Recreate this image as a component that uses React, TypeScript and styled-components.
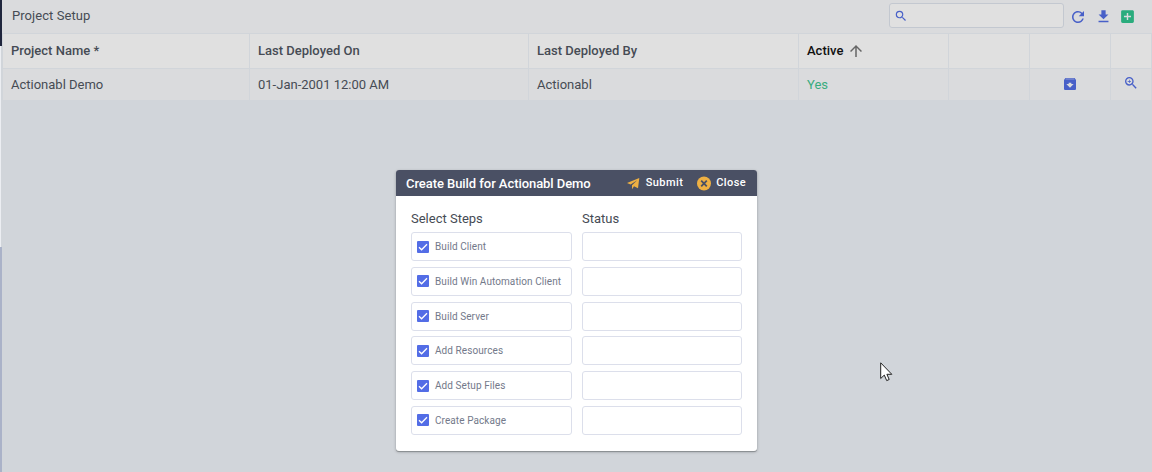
import React from 'react';
import styled, { createGlobalStyle } from 'styled-components';
import { MdSearch, MdRefresh, MdFileDownload, MdAddBox, MdArchive, MdZoomIn, MdArrowUpward } from 'react-icons/md';

const GlobalStyle = createGlobalStyle`
  * { box-sizing: border-box; }
  body { margin: 0; font-family: Roboto, "Liberation Sans", sans-serif; background: #d1d5da; overflow: hidden; }
  svg { display: block; }
`;

const Shell = styled.div`
  display: flex;
  position: relative;
  width: 1152px;
  height: 472px;
  color: #464b54;
`;

const Rail = styled.div`
  display: flex;
  flex-direction: column;
  width: 2px;
`;

const RailPart = styled.div<{ $height?: number; $color: string; $width?: number }>`
  width: ${p => p.$width ?? 2}px;
  background: ${p => p.$color};
  ${p => (p.$height ? `height: ${p.$height}px;` : 'flex: 1;')}
`;

const Page = styled.main`
  flex: 1;
`;

const Toolbar = styled.header`
  display: flex;
  align-items: center;
  height: 33px;
  padding: 0 16px 2px 10px;
  background: #dadbdd;
`;

const Title = styled.h1`
  flex: 1;
  margin: 0;
  font-size: 13px;
  font-weight: 400;
  letter-spacing: 0.06px;
`;

const SearchBox = styled.div`
  display: flex;
  align-items: center;
  width: 175px;
  height: 25px;
  padding-left: 4px;
  margin-right: 5px;
  border: 1px solid #c3c8d0;
  border-radius: 3px;
  background: #e0e0e0;
  color: #4860c8;
`;

const ToolIcon = styled.div<{ $color?: string; $gap?: number }>`
  color: ${p => p.$color ?? '#4860c8'};
  margin: 2px 0 0 ${p => p.$gap ?? 0}px;
`;

const Grid = styled.div`
  border-left: 1px solid #d1d5da;
`;

const GridRow = styled.div<{ $head?: boolean }>`
  display: grid;
  grid-template-columns: 247px 279px 270px 150px 81px 81px 41px;
  height: ${p => (p.$head ? 35 : 32)}px;
  border-top: 1px solid #d1d5da;
  background: ${p => (p.$head ? '#e0e0e0' : '#dadbdd')};
  font-size: 13px;
  font-weight: ${p => (p.$head ? 500 : 400)};
  letter-spacing: 0;
`;

const Cell = styled.div<{ $color?: string; $center?: boolean; $lift?: number }>`
  display: flex;
  align-items: center;
  justify-content: ${p => (p.$center ? 'center' : 'flex-start')};
  gap: 4px;
  padding-left: ${p => (p.$center ? 0 : 8)}px;
  padding-bottom: ${p => p.$lift ?? 0}px;
  border-right: 1px solid #d1d5da;
  color: ${p => p.$color ?? 'inherit'};
`;

const Dialog = styled.section`
  position: absolute;
  left: 396px;
  top: 170px;
  width: 361px;
  height: 281px;
  border-radius: 3px;
  background: #fff;
  box-shadow: 0 1px 0 #8c9194, 0 1px 3px rgba(0, 0, 0, 0.3);
`;

const DialogHeader = styled.div`
  display: flex;
  height: 26px;
  padding: 0 11px 0 10px;
  border-radius: 3px 3px 0 0;
  background: #4a5064;
  color: #fff;
`;

const DialogTitle = styled.h2`
  flex: 1;
  margin: 0;
  font-size: 13px;
  line-height: 27px;
  font-weight: 500;
  letter-spacing: -0.06px;
`;

const Action = styled.button<{ $gap?: number }>`
  display: flex;
  align-items: flex-start;
  gap: 5px;
  margin-left: ${p => p.$gap ?? 0}px;
  padding: 0;
  border: 0;
  background: none;
  color: #fff;
  font: 500 11px/25px Roboto, "Liberation Sans", sans-serif;
  letter-spacing: 0.4px;

  svg { margin-top: 6px; }
`;

const Columns = styled.div`
  display: grid;
  grid-template-columns: 161px 160px;
  column-gap: 10px;
  padding: 14px 15px 0;
`;

const ColumnTitle = styled.div`
  height: 22px;
  font-size: 13px;
  line-height: 18px;
`;

const Field = styled.label`
  display: flex;
  align-items: center;
  height: 29px;
  margin-bottom: 5.75px;
  padding-left: 5px;
  border: 1px solid #dcdfeb;
  border-radius: 3px;
  font-size: 10px;
  letter-spacing: 0.08px;
  color: #73798a;
`;

const Check = styled.span`
  display: flex;
  width: 12px;
  height: 12px;
  margin-right: 6px;
  border-radius: 1px;
  background: #536de6;
`;

const Pointer = styled.svg`
  position: absolute;
  left: 880px;
  top: 362px;
`;

const PlaneIcon = () => (
  <svg width="14" height="15" viewBox="0 0 14 15" fill="#eeb043">
    <path d="M12.3 1.9 0 7 3.6 8.5 10.2 4.2 5 9.2V13.2L7 10.2 11 12.2Z" />
  </svg>
);

const CloseIcon = () => (
  <svg width="14" height="15" viewBox="0 0 14 15">
    <circle cx="7" cy="7.5" r="7" fill="#eeb043" />
    <path d="M4.2 4.7 9.8 10.3M9.8 4.7 4.2 10.3" stroke="#4a5064" strokeWidth="1.8" />
  </svg>
);

const steps = ['Build Client', 'Build Win Automation Client', 'Build Server', 'Add Resources', 'Add Setup Files', 'Create Package'];

export default function App() {
  return (
    <>
      <GlobalStyle />
      <Shell>
        <Rail>
          <RailPart $height={46} $color="#20263d" />
          <RailPart $height={201} $color="#eceef2" $width={1} />
          <RailPart $color="#aab2c8" />
        </Rail>
        <Page>
          <Toolbar>
            <Title>Project Setup</Title>
            <SearchBox><MdSearch size={14} /></SearchBox>
            <ToolIcon><MdRefresh size={18} /></ToolIcon>
            <ToolIcon $gap={8}><MdFileDownload size={17} /></ToolIcon>
            <ToolIcon $gap={7} $color="#2aac7d"><MdAddBox size={17} /></ToolIcon>
          </Toolbar>
          <Grid>
            <GridRow $head>
              <Cell $lift={1}>Project Name *</Cell>
              <Cell $lift={1}>Last Deployed On</Cell>
              <Cell $lift={1}>Last Deployed By</Cell>
              <Cell $lift={1} $color="#111">Active <MdArrowUpward size={18} color="#666" /></Cell>
              <Cell /><Cell /><Cell />
            </GridRow>
            <GridRow>
              <Cell>Actionabl Demo</Cell>
              <Cell>01-Jan-2001 12:00 AM</Cell>
              <Cell>Actionabl</Cell>
              <Cell $color="#39ac7f">Yes</Cell>
              <Cell />
              <Cell $center $lift={1} $color="#4860c8"><MdArchive size={16} /></Cell>
              <Cell $center $lift={3} $color="#4860c8"><MdZoomIn size={16} /></Cell>
            </GridRow>
          </Grid>
        </Page>
        <Dialog>
          <DialogHeader>
            <DialogTitle>Create Build for Actionabl Demo</DialogTitle>
            <Action><PlaneIcon />Submit</Action>
            <Action $gap={14}><CloseIcon />Close</Action>
          </DialogHeader>
          <Columns>
            <div>
              <ColumnTitle>Select Steps</ColumnTitle>
              {steps.map(step => (
                <Field key={step}>
                  <Check>
                    <svg width="12" height="12" viewBox="0 0 12 12" fill="none" stroke="#fff" strokeWidth="1.3">
                      <path d="M2 6.2 4.6 8.8 10 3.2" />
                    </svg>
                  </Check>
                  {step}
                </Field>
              ))}
            </div>
            <div>
              <ColumnTitle>Status</ColumnTitle>
              {steps.map(step => <Field key={step} />)}
            </div>
          </Columns>
        </Dialog>
        <Pointer width="13" height="20" viewBox="0 0 13 20">
          <path d="M.7.8v15.7l3.6-3.4 2.4 5.5 2.5-1.1-2.3-5.2h4.9z" fill="#fff" stroke="#222" strokeWidth="1" />
        </Pointer>
      </Shell>
    </>
  );
}
